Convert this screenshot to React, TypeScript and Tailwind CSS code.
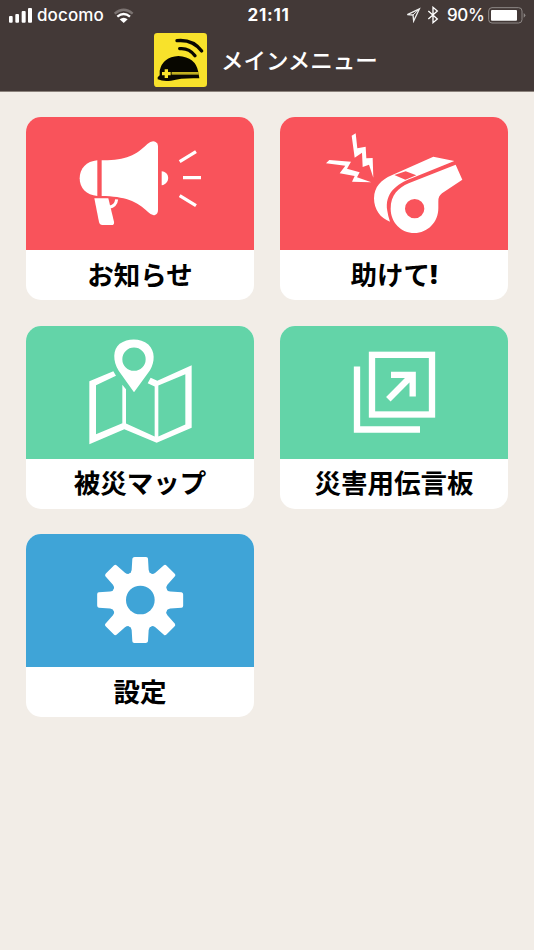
import type { ReactNode } from "react";

const jp = "font-['Noto_Sans_CJK_JP',sans-serif]";

function StatusBar() {
  return (
    <div className="grid h-[30px] grid-cols-3 items-center font-['Inter',sans-serif] text-[17px] leading-none text-white">
      <div className="flex items-center pl-[9px]">
        <svg className="h-[15px] w-6" viewBox="27 21 72 45" fill="white">
          <rect x="27" y="45" width="11" height="20" rx="3" />
          <rect x="46" y="39" width="11" height="26" rx="3" />
          <rect x="65" y="30" width="12" height="35" rx="3" />
          <rect x="84" y="21" width="12" height="44" rx="3" />
        </svg>
        <span className="ml-[4px] w-[68px] whitespace-nowrap text-[17px] font-medium tracking-[0.1px]">docomo</span>
        <svg className="ml-[8px] h-[15px] w-[22px]" viewBox="338 20 66 45" fill="none" strokeWidth="7">
          <path d="M343 37Q370 14 397 37" stroke="#7b7371" />
          <path d="M351 46Q370 30 389 46" stroke="white" />
          <path d="M358 54Q370 45 382 54L370 65Z" fill="white" />
        </svg>
      </div>
      <div className="pl-[3px] text-center font-bold tracking-[0.7px]">21:11</div>
      <div className="flex items-center justify-end pr-[8px]">
        <svg className="h-4 w-[15px]" viewBox="416 22 45 48" fill="none" stroke="#eee" strokeWidth="4">
          <path d="M420 45L456 28L439 64L437 46Z" />
          <path d="M437 46L456 28" strokeWidth="3" />
        </svg>
        <svg className="ml-[6px] h-[18px] w-[12px]" viewBox="481 18 36 54" fill="none" stroke="white" strokeWidth="4">
          <path d="M485 33L512 57L499 68V22L512 33L485 57" />
        </svg>
        <span className="ml-[8px] w-[37px] whitespace-nowrap font-medium tracking-[-0.4px]">90%</span>
        <svg className="ml-[4px] h-[17px] w-[38px]" viewBox="663 19 114 51">
          <rect x="665" y="21" width="100" height="46" rx="10" fill="none" stroke="#8e8886" strokeWidth="3" />
          <rect x="672" y="28" width="78" height="32" rx="3" fill="white" />
          <path d="M770 37Q780 44 770 51Z" fill="#8e8886" />
        </svg>
      </div>
    </div>
  );
}

function HelmetLogo() {
  return (
    <svg className="h-[54px] w-[53px] shrink-0" viewBox="463 100 159 162">
      <rect x="463" y="100" width="159" height="162" rx="10" fill="#f8e22b" />
      <g fill="none" stroke="#080700" strokeWidth="10" strokeLinecap="round">
        <path d="M532 123Q579 118 606 154" />
        <path d="M540 147Q568 144 586 168" />
      </g>
      <path d="M480 213Q489 172 536 169Q588 172 596 217L599 236Q548 234 514 243Q492 247 474 239V233L480 227Z" fill="#080700" />
      <path d="M516 221H597" stroke="#f8e22b" strokeWidth="7" />
      <path d="M516 221H597" stroke="#6b6212" strokeWidth="1.5" />
      <path d="M495 209H505V217H513V227H505V235H495V227H487V217H495Z" fill="#f8e22b" />
    </svg>
  );
}

function MegaphoneIcon() {
  return (
    <svg className="size-full" viewBox="-132 -39 684 399" fill="white">
      <path d="M82 91V198C49 196 29 174 29 145S49 94 82 91Z" />
      <path d="M95 91C165 92 198 76 232 42Q246 30 257 36Q264 39 264 48V240Q264 252 255 255Q246 258 234 246C201 213 164 199 95 198Z" />
      <path d="M275 124C301 126 301 162 275 166Z" />
      <path d="M73 205H115L132 275Q134 285 124 285H97Q89 285 87 276Z" />
      <path d="M140 208Q138 228 117 232" fill="none" stroke="white" strokeWidth="9" />
      <path d="M329 95L378 65M339 143H393M329 197L378 227" stroke="white" strokeWidth="10" />
    </svg>
  );
}

function WhistleIcon() {
  return (
    <svg className="size-full" viewBox="-120 -24 684 399" fill="white">
      <path d="M95 32L107 25L112 70L137 65L139 100L158 99L160 158L147 119L128 126L126 83L104 98Z" />
      <path d="M18 115L28 105L93 110L81 131L119 142L111 157L154 172L96 170L104 153L59 145L76 122Z" />
      <path d="M340 95L403 108L275 160C230 177 193 205 202 258Q204 273 210 290C181 280 162 253 162 220C163 185 183 165 215 151Z" />
      <path d="M223 150L257 139L289 151L256 164Z" fill="#f9535b" />
      <path fillRule="evenodd" d="M407 119L427 164L366 205Q354 214 355 230V249C355 292 323 324 283 324S212 292 212 251C212 211 235 188 266 175ZM284 222A29 29 0 1 0 284 280A29 29 0 1 0 284 222Z" />
    </svg>
  );
}

function MapIcon() {
  return (
    <svg className="size-full" viewBox="-162 -13.5 684 399" fill="white">
      <path fillRule="evenodd" d="M162 185L116 121C98 91 98 58 119 40C144 22 181 22 205 42C226 62 225 94 210 119ZM162 51A35 35 0 1 0 162 121A35 35 0 1 0 162 51Z" />
      <path d="M100 122L108 136L48 164V311L127 278V163L138 176V279L224 318V168L203 158L212 142L232 151L335 104V292L230 337L133 296L28 341V152ZM235 165V318L316 282V131Z" fillRule="evenodd" />
    </svg>
  );
}

function ExternalBoardIcon() {
  return (
    <svg className="size-full" viewBox="-195 -43.5 684 399" fill="none" stroke="white">
      <rect x="81" y="43" width="180" height="179" strokeWidth="19" />
      <path d="M36 78V267H225" strokeWidth="19" />
      <path d="M138 103H203V168M203 103L130 176" strokeWidth="19" />
    </svg>
  );
}

const gearTeeth = [0, 45, 90, 135, 180, 225, 270, 315];

function GearIcon() {
  return (
    <svg className="size-full" viewBox="-192 -48 684 399" fill="white">
      <circle cx="150.500" cy="150" r="86" />
      {gearTeeth.map((angle) => (
        <path
          key={angle}
          transform={`rotate(${angle} 150.5 150)`}
          d="M116 73Q124 69 125 60L127 26Q128 21 134 21H168Q174 21 174 26L176 60Q177 69 185 73L177 105H124Z"
        />
      ))}
      <circle cx="151" cy="150" r="43" fill="#3fa4d7" />
    </svg>
  );
}

function Tile({ color, label, children }: { color: string; label: ReactNode; children: ReactNode }) {
  return (
    <button className="flex h-[183px] flex-col overflow-hidden rounded-[15px] bg-white">
      <span className={`h-[133px] w-full ${color}`}>{children}</span>
      <span className={`flex h-[50px] w-full items-center justify-center whitespace-nowrap pb-[2px] ${jp} text-[26.5px] font-bold leading-none text-black`}>
        {label}
      </span>
    </button>
  );
}

export default function App() {
  return (
    <div className="flex h-[950px] w-[534px] flex-col overflow-hidden bg-[#f2ede7]">
      <header className="h-[92px] shrink-0 border-b border-[#8a817b] bg-[#433937]">
        <StatusBar />
        <div className="flex items-center pl-[154px] pt-[3px]">
          <HelmetLogo />
          <h1 className={`ml-[14px] whitespace-nowrap pb-[2px] ${jp} text-[22.5px] font-medium leading-none text-white`}>メインメニュー</h1>
        </div>
      </header>
      <main className="grid grid-cols-2 gap-x-[26px] gap-y-[25.5px] px-[26px] pt-[25px]">
        <Tile color="bg-[#f9535b]" label="お知らせ"><MegaphoneIcon /></Tile>
        <Tile color="bg-[#f9535b]" label={<>助けて<span className="font-['Open_Sans',sans-serif] font-extrabold">!</span></>}><WhistleIcon /></Tile>
        <Tile color="bg-[#63d4a8]" label="被災マップ"><MapIcon /></Tile>
        <Tile color="bg-[#63d4a8]" label="災害用伝言板"><ExternalBoardIcon /></Tile>
        <Tile color="bg-[#3fa4d7]" label="設定"><GearIcon /></Tile>
      </main>
    </div>
  );
}
